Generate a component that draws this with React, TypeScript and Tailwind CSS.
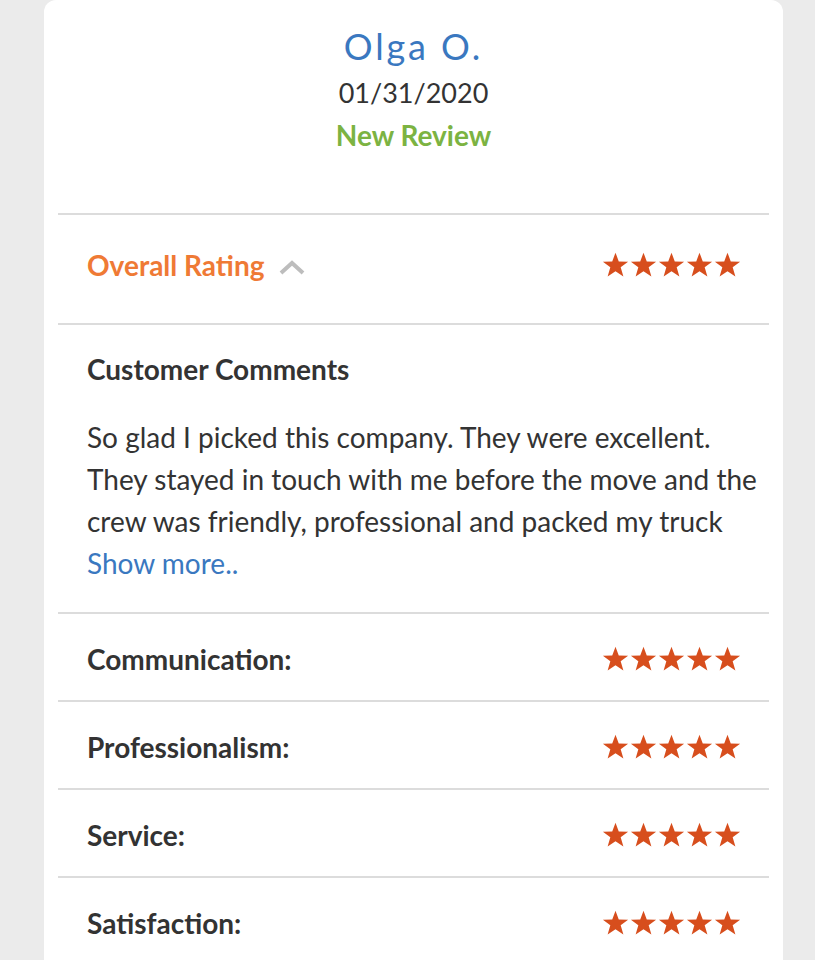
import { ReactNode } from "react";

//Five filled stars
function Stars() {
  return (
    <div className="flex gap-[1px]">
      {[0, 1, 2, 3, 4].map((i) => (
        <svg key={i} width="27" height="26" viewBox="0 0 24 23">
          <polygon
            points="12,0.5 14.9,8.3 23.2,8.5 16.6,13.6 19,21.8 12,17 5,21.8 7.4,13.6 0.8,8.5 9.1,8.3"
            fill="#d74e1d"
          />
        </svg>
      ))}
    </div>
  );
}

function Divider() {
  return <div className="h-[2px] bg-[#dcdcdc]" />;
}

function RatingRow({ label }: { label: ReactNode }) {
  return (
    <>
      <Divider />
      <div className="flex items-center justify-between h-[86px] pt-[3px] pl-[29px] pr-[28px]">
        <span className="text-[28px] font-bold text-[#333333]">{label}</span>
        <Stars />
      </div>
    </>
  );
}

const comment = [
  "So glad I picked this company. They were excellent.",
  "They stayed in touch with me before the move and the",
  "crew was friendly, professional and packed my truck",
];

export default function App() {
  return (
    <div
      className="bg-[#ebebeb] h-[960px] overflow-hidden pl-[44px]"
      style={{ fontFamily: "Lato, 'Open Sans', sans-serif" }}
    >
      <div className="bg-white w-[739px] rounded-t-[12px] px-[14px] h-[1000px]">
        {/* Reviewer header */}
        <div className="flex flex-col items-center pt-[24px] pb-[57px]">
          <div className="text-[36px] leading-[44px] tracking-[0.08em] text-[#3a78c0]">
            Olga O.
          </div>
          <div className="text-[27px] leading-[42px] text-[#333333] mt-[4px]">
            01/31/2020
          </div>
          <div className="text-[28px] leading-[42px] font-bold text-[#7cb342]">
            New Review
          </div>
        </div>

        <Divider />
        {/* Overall rating */}
        <div className="flex items-center justify-between h-[108px] pb-[8px] pl-[29px] pr-[28px]">
          <div className="flex items-center gap-[15px]">
            <span className="text-[28px] font-bold text-[#ef7a35]">
              Overall Rating
            </span>
            <svg width="26" height="16" viewBox="0 0 26 16" className="mt-[6px]">
              <polyline
                points="2,13 13,3 24,13"
                fill="none"
                stroke="#bdbdbd"
                strokeWidth="4"
              />
            </svg>
          </div>
          <Stars />
        </div>

        <Divider />
        {/* Comments */}
        <div className="pl-[29px] pr-[14px] pt-[28px] h-[287px]">
          <div className="text-[28px] font-bold text-[#333333] leading-[32px]">
            Customer Comments
          </div>
          <div className="text-[28px] leading-[42px] text-[#333333] mt-[31px]">
            {comment.map((line) => (
              <div key={line} className="whitespace-nowrap">
                {line}
              </div>
            ))}
          </div>
          <div className="text-[28px] leading-[42px] text-[#3a78c0]">
            Show more..
          </div>
        </div>

        <RatingRow label="Communication:" />
        <RatingRow label="Professionalism:" />
        <RatingRow label="Service:" />
        <RatingRow label="Satisfaction:" />
      </div>
    </div>
  );
}
